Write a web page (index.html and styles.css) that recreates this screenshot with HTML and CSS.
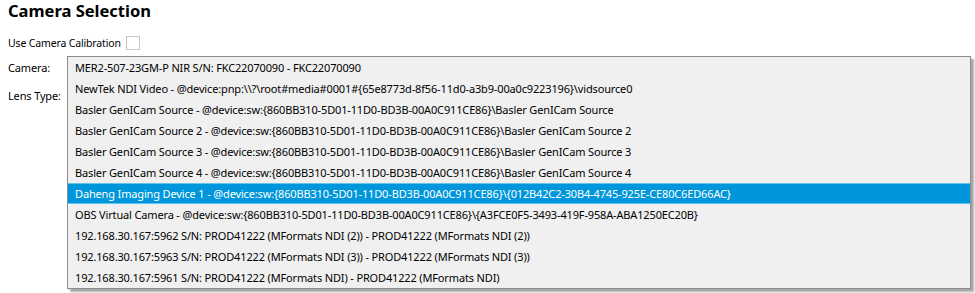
FILE: index.html
```html
<!DOCTYPE html>
<html lang="en">
<head>
    <meta charset="UTF-8">
    <title>Camera Selection</title>
    <link rel="stylesheet" href="styles.css">
</head>
<body>
    <div class="panel">
        <h2 class="title">Camera Selection</h2>

        <div class="calib">
            <span>Use Camera Calibration</span>
            <span class="checkbox"></span>
        </div>

        <div class="field camera-field">
            <span class="label">Camera:</span>
            <div class="combo-wrap">
                <ul class="dropdown">
                    <li>MER2-507-23GM-P NIR S/N: FKC22070090 - FKC22070090</li>
                    <li>NewTek NDI Video - @device:pnp:\\?\root#media#0001#{65e8773d-8f56-11d0-a3b9-00a0c9223196}\vidsource0</li>
                    <li>Basler GenICam Source - @device:sw:{860BB310-5D01-11D0-BD3B-00A0C911CE86}\Basler GenICam Source</li>
                    <li>Basler GenICam Source 2 - @device:sw:{860BB310-5D01-11D0-BD3B-00A0C911CE86}\Basler GenICam Source 2</li>
                    <li>Basler GenICam Source 3 - @device:sw:{860BB310-5D01-11D0-BD3B-00A0C911CE86}\Basler GenICam Source 3</li>
                    <li>Basler GenICam Source 4 - @device:sw:{860BB310-5D01-11D0-BD3B-00A0C911CE86}\Basler GenICam Source 4</li>
                    <li class="selected">Daheng Imaging Device 1 - @device:sw:{860BB310-5D01-11D0-BD3B-00A0C911CE86}\{012B42C2-30B4-4745-925E-CE80C6ED66AC}</li>
                    <li>OBS Virtual Camera - @device:sw:{860BB310-5D01-11D0-BD3B-00A0C911CE86}\{A3FCE0F5-3493-419F-958A-ABA1250EC20B}</li>
                    <li>192.168.30.167:5962 S/N: PROD41222 (MFormats NDI (2)) - PROD41222 (MFormats NDI (2))</li>
                    <li>192.168.30.167:5963 S/N: PROD41222 (MFormats NDI (3)) - PROD41222 (MFormats NDI (3))</li>
                    <li>192.168.30.167:5961 S/N: PROD41222 (MFormats NDI) - PROD41222 (MFormats NDI)</li>
                </ul>
            </div>
        </div>

        <div class="field lens-field">
            <span class="label">Lens Type:</span>
        </div>
    </div>
</body>
</html>
```

FILE: styles.css
```css
body {
    margin: 0;
    padding: 0;
    background-color: #fff;
    font-family: 'Noto Sans', 'Open Sans', sans-serif;
    font-size: 11px;
    letter-spacing: -0.15px;
    color: #000;
}

.panel {
    padding: 0 8px;
    min-height: 293px;
}

.title {
    margin: 0;
    height: 32px;
    font-size: 16.5px;
    font-weight: bold;
    line-height: 21px;
    letter-spacing: 0;
}

.calib {
    display: flex;
    align-items: center;
    gap: 5px;
    height: 22px;
    font-size: 10.5px;
}

.checkbox {
    width: 12px;
    height: 12px;
    border: 1px solid #c8c8c8;
    background: #fff;
}

.field {
    display: flex;
    align-items: center;
    height: 30px;
}

.camera-field {
    height: 26px;
}

.label {
    width: 59px;
    white-space: nowrap;
}

.combo-wrap {
    position: relative;
    flex: 1;
    align-self: stretch;
}

/* the open list of the camera combo, drawn over the form */
.dropdown {
    position: absolute;
    left: 0;
    top: 2px;
    width: 902px;
    margin: 0;
    padding: 0;
    list-style: none;
    background: #f0f0f0;
    border: 1px solid #8c8c8c;
    box-shadow: 3px 3px 2px rgba(0, 0, 0, 0.35);
    z-index: 2;
}

.dropdown li {
    height: 21px;
    line-height: 21px;
    padding-left: 7px;
    white-space: nowrap;
}

.dropdown .selected {
    background: #0096db;
    color: #fff;
    height: 19px;
    line-height: 19px;
    border-top: 1px solid #5fc4f0;
    border-bottom: 1px solid #5fc4f0;
}
```
